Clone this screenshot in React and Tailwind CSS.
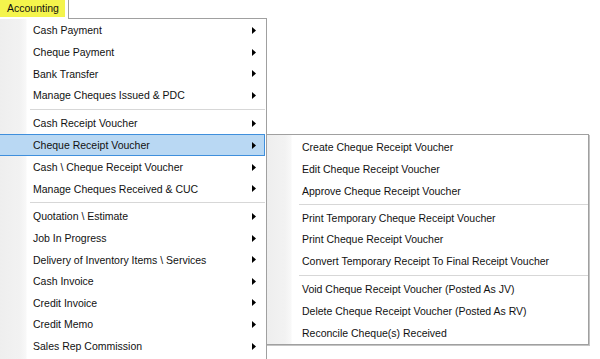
const mainGroups = [
  [
    { label: 'Cash Payment', h: 'h-[22px]' },
    { label: 'Cheque Payment', h: 'h-[22px]' },
    { label: 'Bank Transfer', h: 'h-[21px]' },
    { label: 'Manage Cheques Issued & PDC', h: 'h-[22px]' },
  ],
  [
    { label: 'Cash Receipt Voucher', h: 'h-[22px]' },
    { label: 'Cheque Receipt Voucher', h: 'h-[22px]', active: true },
    { label: 'Cash \\ Cheque Receipt Voucher', h: 'h-[22px]' },
    { label: 'Manage Cheques Received & CUC', h: 'h-[21px]' },
  ],
  [
    { label: 'Quotation \\ Estimate', h: 'h-[22px]' },
    { label: 'Job In Progress', h: 'h-[22px]' },
    { label: 'Delivery of Inventory Items \\ Services', h: 'h-[21px]' },
    { label: 'Cash Invoice', h: 'h-[22px]' },
    { label: 'Credit Invoice', h: 'h-[21px]' },
    { label: 'Credit Memo', h: 'h-[22px]' },
    { label: 'Sales Rep Commission', h: 'h-[22px]' },
  ],
];

const subGroups = [
  [
    { label: 'Create Cheque Receipt Voucher', h: 'h-[22px]' },
    { label: 'Edit Cheque Receipt Voucher', h: 'h-[22px]' },
    { label: 'Approve Cheque Receipt Voucher', h: 'h-[21px]' },
  ],
  [
    { label: 'Print Temporary Cheque Receipt Voucher', h: 'h-[21px]' },
    { label: 'Print Cheque Receipt Voucher', h: 'h-[22px]' },
    { label: 'Convert Temporary Receipt To Final Receipt Voucher', h: 'h-[22px]' },
  ],
  [
    { label: 'Void Cheque Receipt Voucher (Posted As JV)', h: 'h-[22px]' },
    { label: 'Delete Cheque Receipt Voucher (Posted As RV)', h: 'h-[22px]' },
    { label: 'Reconcile Cheque(s) Received', h: 'h-[22px]' },
  ],
];

const Arrow = () => (
  <svg width="4" height="7" viewBox="0 0 4 7" className="shrink-0">
    <polygon points="0,0 4,3.5 0,7" fill="#000" />
  </svg>
);

const Separator = () => (
  <div className="h-[6px] pl-[31px] pt-[3px]">
    <div className="h-px bg-[#d7d7d7]" />
  </div>
);

const Item = ({ label, h, active, arrow }) => (
  <div
    className={`flex items-center border pl-[33px] pr-[8px] ${h} ${
      active ? 'border-[#3f8fdc] bg-[#b9d8f3]' : 'border-transparent'
    }`}
  >
    <span className="flex-1 translate-y-[1px] whitespace-nowrap">{label}</span>
    {arrow && <Arrow />}
  </div>
);

const Menu = ({ groups, arrow }) =>
  groups.map((group, i) => (
    <div key={i}>
      {i > 0 && <Separator />}
      {group.map((item) => (
        <Item key={item.label} {...item} arrow={arrow} />
      ))}
    </div>
  ));

export default function App() {
  return (
    <div className="relative h-[359px] w-[600px] overflow-hidden bg-white font-['Liberation_Sans',Arial,sans-serif] text-[10.5px] text-[#111]">
      <div className="flex w-[267px]">
        <div className="h-[19px] w-[69px] border-r border-[#a0a0a0] bg-white pr-[3px]">
          <div className="flex h-[17px] items-center bg-[#f4f44c] pl-[7px]">Accounting</div>
        </div>
        <div className="flex-1 self-end border-b border-[#a0a0a0]" />
      </div>

      <div className="ml-[-3px] h-[360px] w-[270px] border-x border-[#a0a0a0] bg-[linear-gradient(90deg,#eeeeee_0px,#f2f2f2_22px,#f8f8f8_28px,#ffffff_29px)] px-[1px]">
        <Menu groups={mainGroups} arrow />
      </div>

      <div className="absolute left-[266px] top-[134px] w-[323px] border border-[#a0a0a0] bg-[linear-gradient(90deg,#eeeeee_0px,#f2f2f2_18px,#f8f8f8_24px,#ffffff_25px)] pt-[1px] pl-[1px] shadow-[1px_1px_0_#c4c4c4]">
        <Menu groups={subGroups} />
      </div>
    </div>
  );
}
